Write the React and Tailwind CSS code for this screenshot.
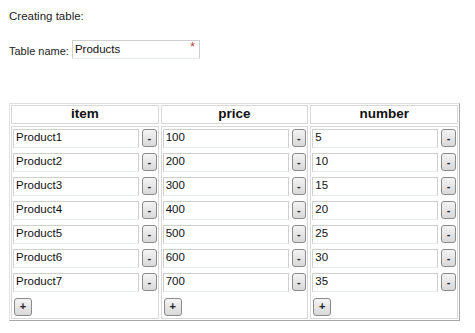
import React from 'react';

const columns = [
  { name: 'item', values: ['Product1', 'Product2', 'Product3', 'Product4', 'Product5', 'Product6', 'Product7'] },
  { name: 'price', values: ['100', '200', '300', '400', '500', '600', '700'] },
  { name: 'number', values: ['5', '10', '15', '20', '25', '30', '35'] },
];

const SmallButton = ({ children, className = '' }) => (
  <button
    className={`flex items-center justify-center rounded-[3px] border border-[#8a8a8a] bg-gradient-to-b from-[#f4f4f4] to-[#d9d9d9] text-[11px] font-bold leading-none text-[#222] ${className}`}
  >
    {children}
  </button>
);

const TextBox = ({ value, className = '' }) => (
  <div
    className={`flex h-[19px] items-center border border-[#cfcfcf] border-b-[#e6ebf0] bg-white pl-[2px] text-[11.5px] text-[#111] ${className}`}
  >
    {value}
  </div>
);

export default function App() {
  return (
    <div
      className="h-[333px] w-[475px] bg-white text-[11.5px] text-[#222]"
      style={{ fontFamily: '"Liberation Sans", Arial, sans-serif' }}
    >
      <div className="pl-[9px] pt-[9px] leading-[14px]">Creating table:</div>

      <div className="mt-[17px] flex items-center pl-[9px]">
        <span className="mr-[3px] mt-[3px] text-[11px]">Table name:</span>
        <div className="relative">
          <TextBox value="Products" className="w-[128px]" />
          <span className="absolute right-[5px] top-[1px] text-[12px] leading-none text-[#c0392b]">*</span>
        </div>
      </div>

      <div className="ml-[9px] mt-[43px] grid w-[451px] grid-cols-3 gap-[2px] border border-[#e2e2e2] border-r-[#a8a8a8] border-b-[#a8a8a8] p-px">
        {columns.map((col) => (
          <div
            key={col.name}
            className="flex h-[19px] items-center justify-center border border-[#d8d8d8] text-[13.5px] font-bold text-[#111]"
          >
            {col.name}
          </div>
        ))}
        {columns.map((col) => (
          <div key={col.name} className="flex flex-col gap-[5px] border border-[#d8d8d8] px-px pb-[2px] pt-[2px]">
            {col.values.map((v) => (
              <div key={v} className="flex items-center">
                <TextBox value={v} className="w-[128px]" />
                <SmallButton className="ml-[3px] h-[18px] w-[15px]">-</SmallButton>
              </div>
            ))}
            <SmallButton className="mt-[1px] ml-px h-[18px] w-[18px]">+</SmallButton>
          </div>
        ))}
      </div>
    </div>
  );
}
